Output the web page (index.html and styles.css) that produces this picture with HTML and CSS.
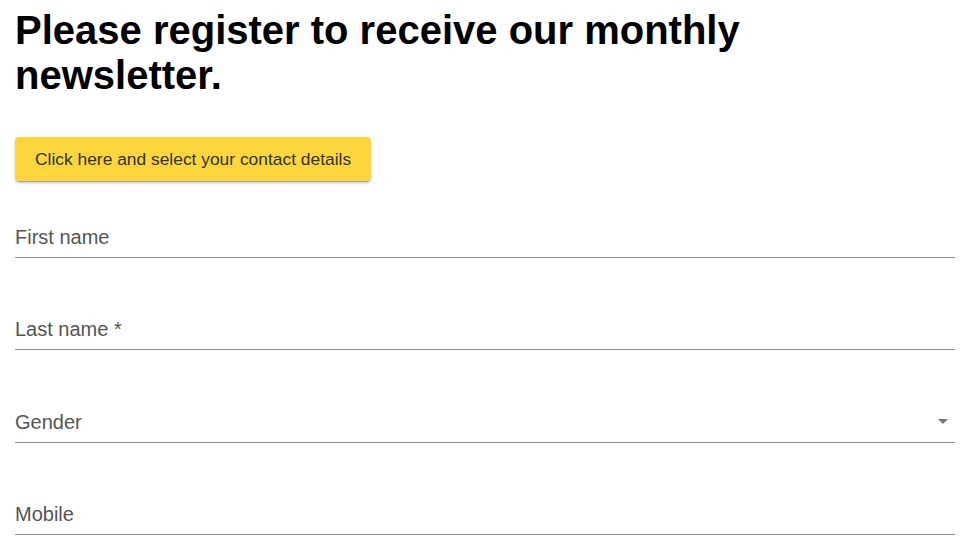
FILE: index.html
```html
<!DOCTYPE html>
<html lang="en">
<head>
  <meta charset="UTF-8" />
  <meta name="viewport" content="width=device-width, initial-scale=1.0"/>
  <title>Newsletter registration</title>
  <link rel="stylesheet" href="styles.css">
</head>
<body>
  <div class="page">
    <h1>Please register to receive our monthly newsletter.</h1>
    <button type="button" class="contact-btn">Click here and select your contact details</button>
    <form class="fields">
      <div class="field"><span class="label">First name</span></div>
      <div class="field"><span class="label">Last name *</span></div>
      <div class="field select">
        <span class="label">Gender</span>
        <svg class="arrow" viewBox="0 0 24 24" width="24" height="24"><path d="M7 10l5 5 5-5z"/></svg>
      </div>
      <div class="field"><span class="label">Mobile</span></div>
    </form>
  </div>
</body>
</html>
```

FILE: styles.css
```css
body {
  margin: 0;
  font-family: "Liberation Sans", Arial, sans-serif;
  background: #fff;
}
.page {
  padding: 8px 23px 0 15px;
}
h1 {
  margin: 0;
  font-size: 40px;
  line-height: 45px;
  font-weight: bold;
  color: #000;
  max-width: 760px;
}
.contact-btn {
  margin-top: 39px;
  height: 44px;
  padding: 0 20px;
  font-family: inherit;
  font-size: 17.4px;
  color: #333;
  background-color: #fdd63f;
  border: none;
  border-radius: 4px;
  cursor: pointer;
  box-shadow: 0 3px 1px -2px rgba(0, 0, 0, 0.2), 0 2px 2px 0 rgba(0, 0, 0, 0.14), 0 1px 5px 0 rgba(0, 0, 0, 0.12);
}
.fields {
  display: flex;
  flex-direction: column;
  gap: 15.33px;
}
.field {
  display: flex;
  align-items: center;
  justify-content: space-between;
  padding: 45px 0 8px;
  border-bottom: 1px solid #949494;
}
.label {
  font-size: 20px;
  line-height: 23px;
  color: #555;
}
.arrow {
  fill: #757575;
  margin-top: -2px;
}
```
